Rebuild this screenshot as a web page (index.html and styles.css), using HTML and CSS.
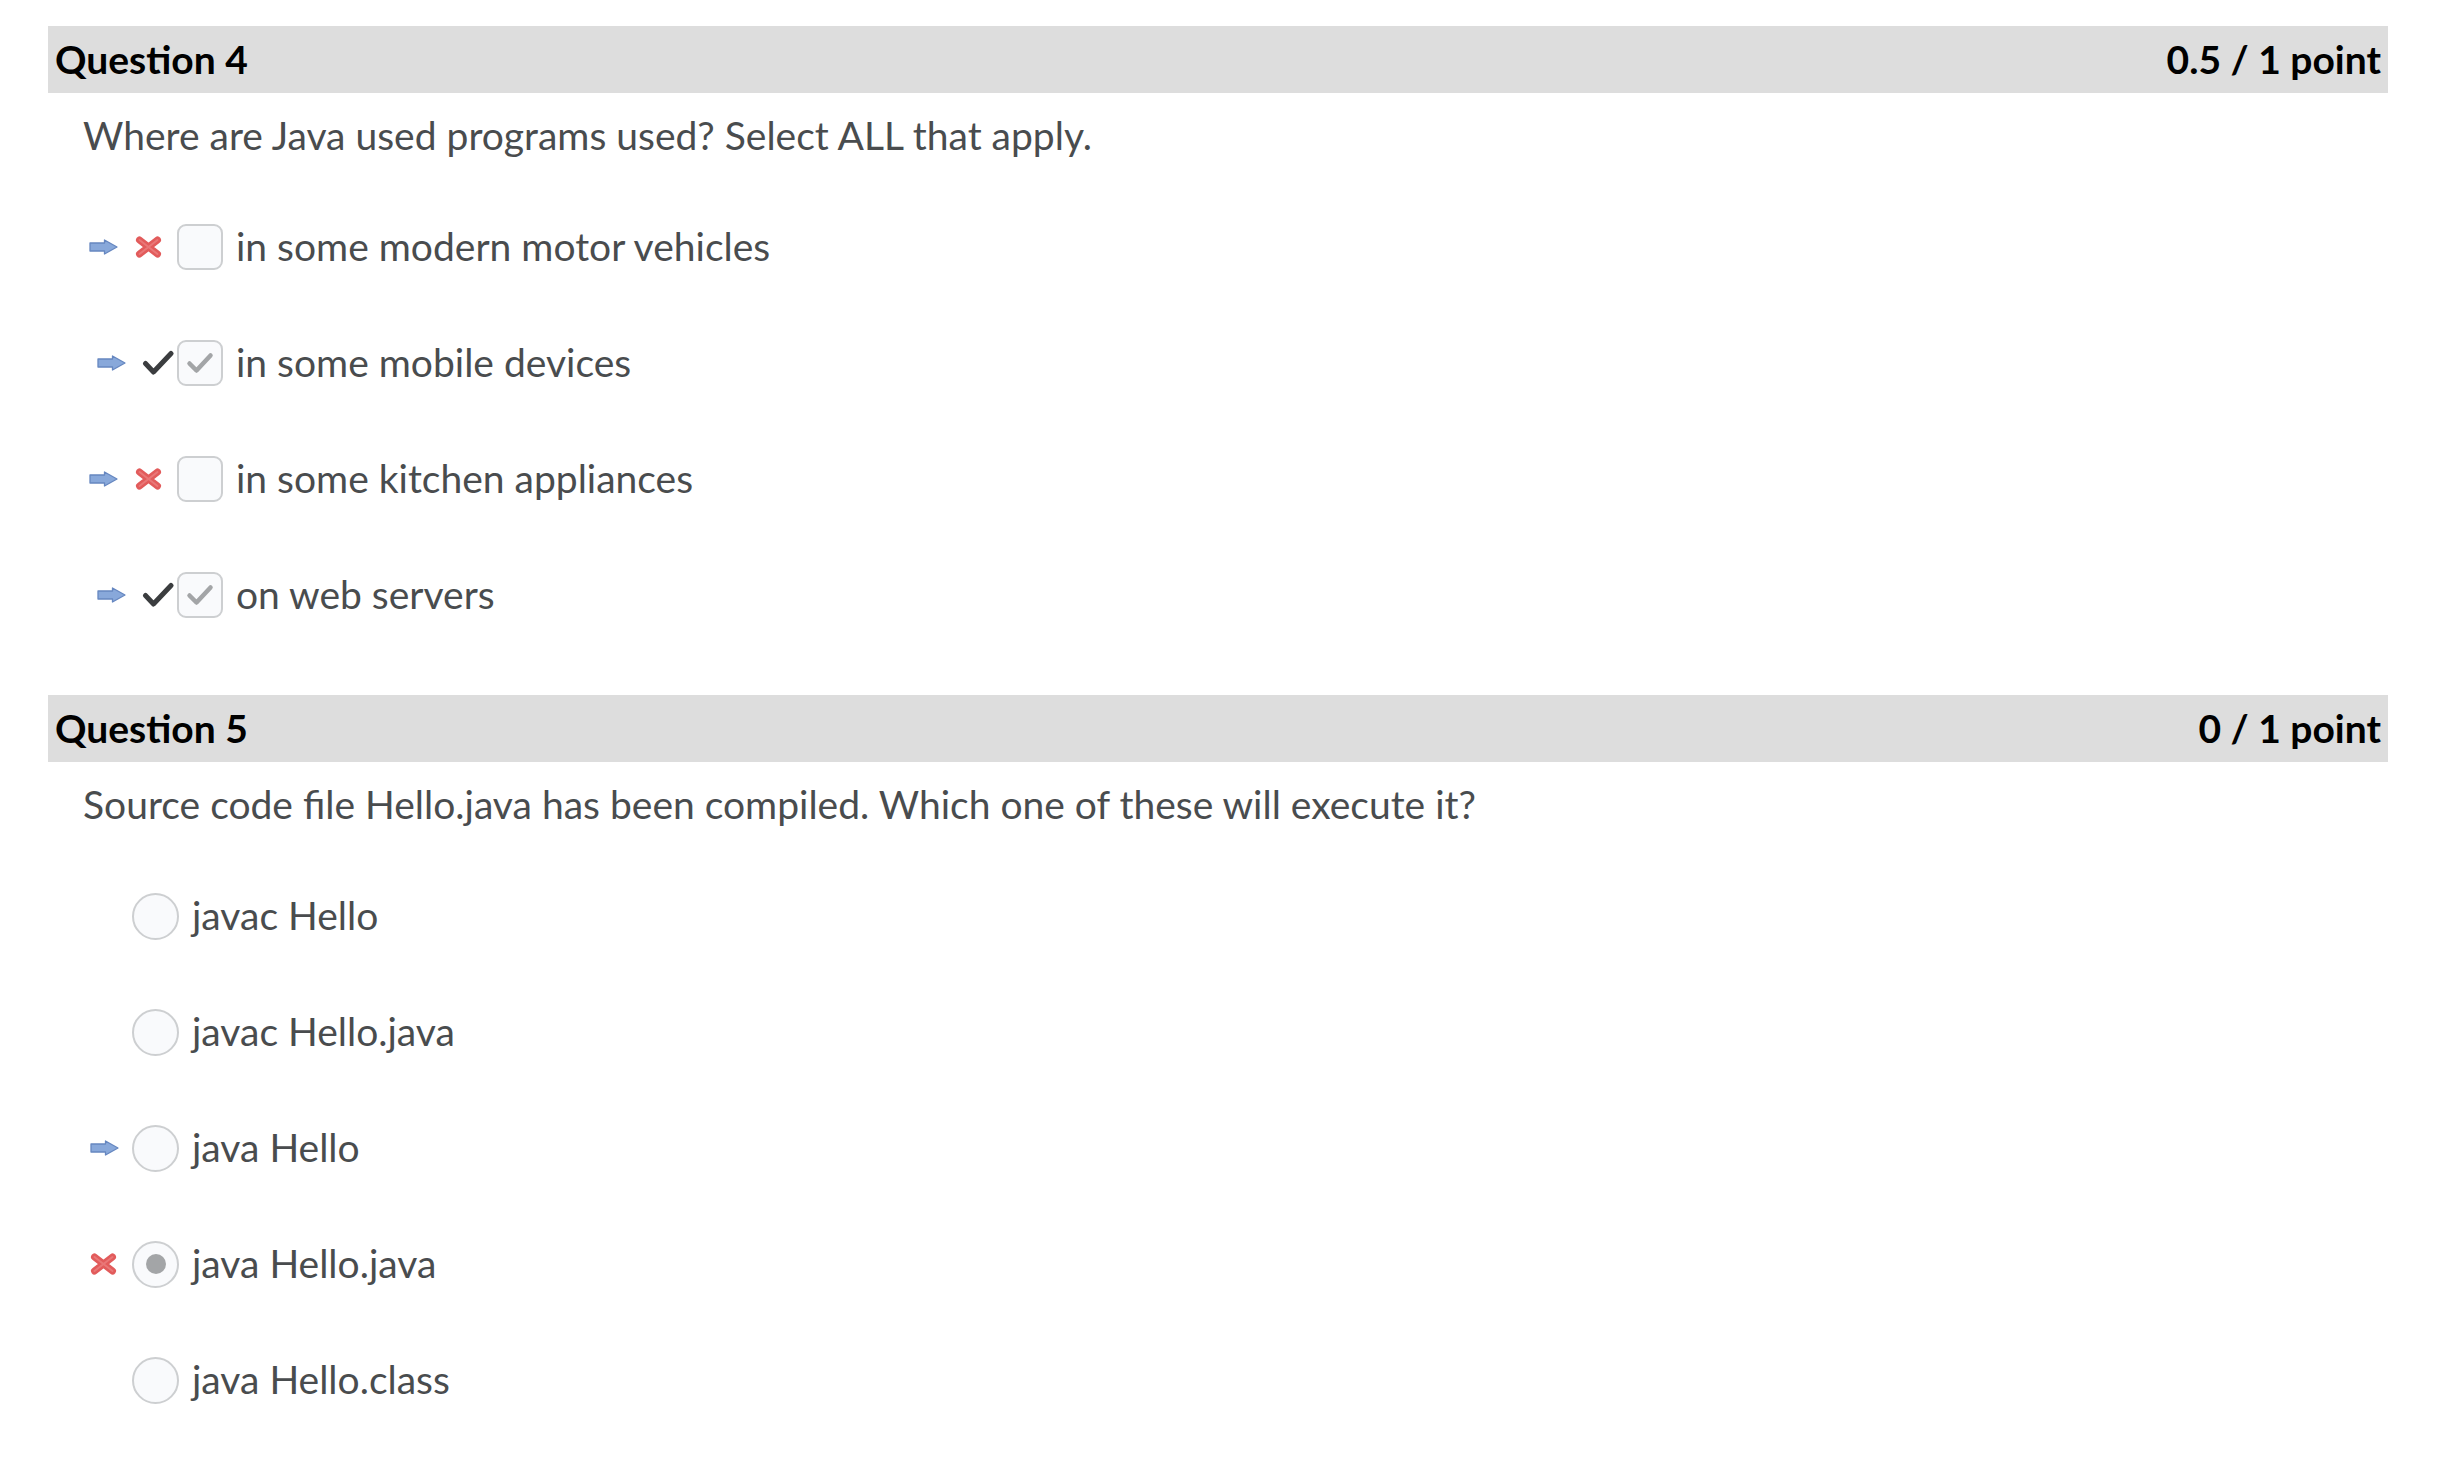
FILE: index.html
```html
<!DOCTYPE html>
<html lang="en">
<head>
<meta charset="utf-8">
<title>Quiz results</title>
<link rel="stylesheet" href="styles.css">
</head>
<body>
<main class="quiz">
  <section class="question">
    <header class="q-head"><span>Question 4</span><span>0.5 / 1 point</span></header>
    <p class="q-text">Where are Java used programs used? Select ALL that apply.</p>
    <ul class="options">
      <li class="opt">
        <span class="marks marks-cb">
          <svg class="arrow" width="29" height="16" viewBox="0 0 29 16"><path d="M1 4h14.5V1L28 8l-12.5 7v-3H1z" fill="#88a8da" stroke="#6687c0" stroke-width="1.3" stroke-linejoin="round"/></svg>
          <svg class="mk-x" width="42" height="22" viewBox="0 0 42 22"><path d="M4.5 4l18 14M22.5 4l-18 14" stroke="#e25b5b" stroke-width="7" stroke-linecap="round"/><path d="M4.5 4l18 14M22.5 4l-18 14" stroke="#ef8a8a" stroke-width="2" stroke-linecap="round" opacity="0.6"/></svg>
        </span>
        <span class="checkbox"></span>
        <span class="label">in some modern motor vehicles</span>
      </li>
      <li class="opt">
        <span class="marks marks-cb">
          <svg class="arrow arrow-c" width="29" height="16" viewBox="0 0 29 16"><path d="M1 4h14.5V1L28 8l-12.5 7v-3H1z" fill="#88a8da" stroke="#6687c0" stroke-width="1.3" stroke-linejoin="round"/></svg>
          <svg class="mk-c" width="35" height="26" viewBox="0 0 35 26"><path d="M3.5 13.5l8 8.5L29 3.5" fill="none" stroke="#3b3d3f" stroke-width="5" stroke-linecap="round" stroke-linejoin="round"/></svg>
        </span>
        <span class="checkbox"><svg width="28" height="22" viewBox="0 0 28 22"><path d="M3.5 11.5l7 7L24.5 3.5" fill="none" stroke="#a3a5a7" stroke-width="4.5" stroke-linecap="round" stroke-linejoin="round"/></svg></span>
        <span class="label">in some mobile devices</span>
      </li>
      <li class="opt">
        <span class="marks marks-cb">
          <svg class="arrow" width="29" height="16" viewBox="0 0 29 16"><path d="M1 4h14.5V1L28 8l-12.5 7v-3H1z" fill="#88a8da" stroke="#6687c0" stroke-width="1.3" stroke-linejoin="round"/></svg>
          <svg class="mk-x" width="42" height="22" viewBox="0 0 42 22"><path d="M4.5 4l18 14M22.5 4l-18 14" stroke="#e25b5b" stroke-width="7" stroke-linecap="round"/><path d="M4.5 4l18 14M22.5 4l-18 14" stroke="#ef8a8a" stroke-width="2" stroke-linecap="round" opacity="0.6"/></svg>
        </span>
        <span class="checkbox"></span>
        <span class="label">in some kitchen appliances</span>
      </li>
      <li class="opt">
        <span class="marks marks-cb">
          <svg class="arrow arrow-c" width="29" height="16" viewBox="0 0 29 16"><path d="M1 4h14.5V1L28 8l-12.5 7v-3H1z" fill="#88a8da" stroke="#6687c0" stroke-width="1.3" stroke-linejoin="round"/></svg>
          <svg class="mk-c" width="35" height="26" viewBox="0 0 35 26"><path d="M3.5 13.5l8 8.5L29 3.5" fill="none" stroke="#3b3d3f" stroke-width="5" stroke-linecap="round" stroke-linejoin="round"/></svg>
        </span>
        <span class="checkbox"><svg width="28" height="22" viewBox="0 0 28 22"><path d="M3.5 11.5l7 7L24.5 3.5" fill="none" stroke="#a3a5a7" stroke-width="4.5" stroke-linecap="round" stroke-linejoin="round"/></svg></span>
        <span class="label">on web servers</span>
      </li>
    </ul>
  </section>

  <section class="question q-second">
    <header class="q-head"><span>Question 5</span><span>0 / 1 point</span></header>
    <p class="q-text">Source code file Hello.java has been compiled. Which one of these will execute it?</p>
    <ul class="options">
      <li class="opt">
        <span class="marks marks-rb"></span>
        <span class="radio"></span>
        <span class="label">javac Hello</span>
      </li>
      <li class="opt">
        <span class="marks marks-rb"></span>
        <span class="radio"></span>
        <span class="label">javac Hello.java</span>
      </li>
      <li class="opt">
        <span class="marks marks-rb">
          <svg class="arrow" width="29" height="16" viewBox="0 0 29 16"><path d="M1 4h14.5V1L28 8l-12.5 7v-3H1z" fill="#88a8da" stroke="#6687c0" stroke-width="1.3" stroke-linejoin="round"/></svg>
        </span>
        <span class="radio"></span>
        <span class="label">java Hello</span>
      </li>
      <li class="opt">
        <span class="marks marks-rb">
          <svg class="mk-x5" width="27" height="22" viewBox="0 0 27 22"><path d="M4.5 4l18 14M22.5 4l-18 14" stroke="#e25b5b" stroke-width="7" stroke-linecap="round"/><path d="M4.5 4l18 14M22.5 4l-18 14" stroke="#ef8a8a" stroke-width="2" stroke-linecap="round" opacity="0.6"/></svg>
        </span>
        <span class="radio radio-on"><span class="dot"></span></span>
        <span class="label">java Hello.java</span>
      </li>
      <li class="opt">
        <span class="marks marks-rb"></span>
        <span class="radio"></span>
        <span class="label">java Hello.class</span>
      </li>
    </ul>
  </section>
</main>
</body>
</html>
```

FILE: styles.css
```css
html, body {
  margin: 0;
  padding: 0;
  background: #ffffff;
}

body {
  font-family: Lato, "Open Sans", "Liberation Sans", sans-serif;
  color: #494c4e;
}

.quiz {
  padding: 26px 0 0 48px;
  width: 2340px;
}

.question {
  display: flex;
  flex-direction: column;
}

.q-second {
  margin-top: 42px;
}

.q-head {
  display: flex;
  justify-content: space-between;
  align-items: center;
  height: 67px;
  line-height: 67px;
  padding: 0 7px;
  background: #dddddd;
  color: #000000;
  font-size: 39px;
  font-weight: 700;
}

.q-text {
  margin: 19px 0 0 35px;
  font-size: 39px;
  line-height: 47px;
}

.options {
  list-style: none;
  margin: 30px 0 0 0;
  padding: 0 0 0 35px;
}

.opt {
  display: flex;
  align-items: center;
  height: 116px;
}

.marks {
  display: flex;
  align-items: center;
  justify-content: flex-end;
  flex: none;
}

.marks-cb {
  width: 94px;
}

.marks-rb {
  width: 49px;
}

.marks svg {
  display: block;
  flex: none;
}

.marks-cb .arrow {
  margin-right: 17px;
}

.marks-cb .arrow-c {
  margin-right: 16px;
}

.marks-rb .arrow {
  margin-right: 13px;
}

.marks-rb .mk-x5 {
  margin-right: 15px;
}

.checkbox {
  flex: none;
  box-sizing: border-box;
  width: 46px;
  height: 46px;
  border: 2px solid #cdcfd1;
  border-radius: 9px;
  background: #f9fafc;
  display: flex;
  align-items: center;
  justify-content: center;
}

.checkbox svg {
  display: block;
}

.radio {
  flex: none;
  box-sizing: border-box;
  width: 47px;
  height: 47px;
  border: 2px solid #cdcfd1;
  border-radius: 50%;
  background: #f9fafc;
  display: flex;
  align-items: center;
  justify-content: center;
}

.radio .dot {
  width: 20px;
  height: 20px;
  border-radius: 50%;
  background: #a3a5a7;
}

.label {
  margin-left: 13px;
  margin-bottom: 2px;
  font-size: 39px;
  line-height: 47px;
  white-space: nowrap;
}
```
